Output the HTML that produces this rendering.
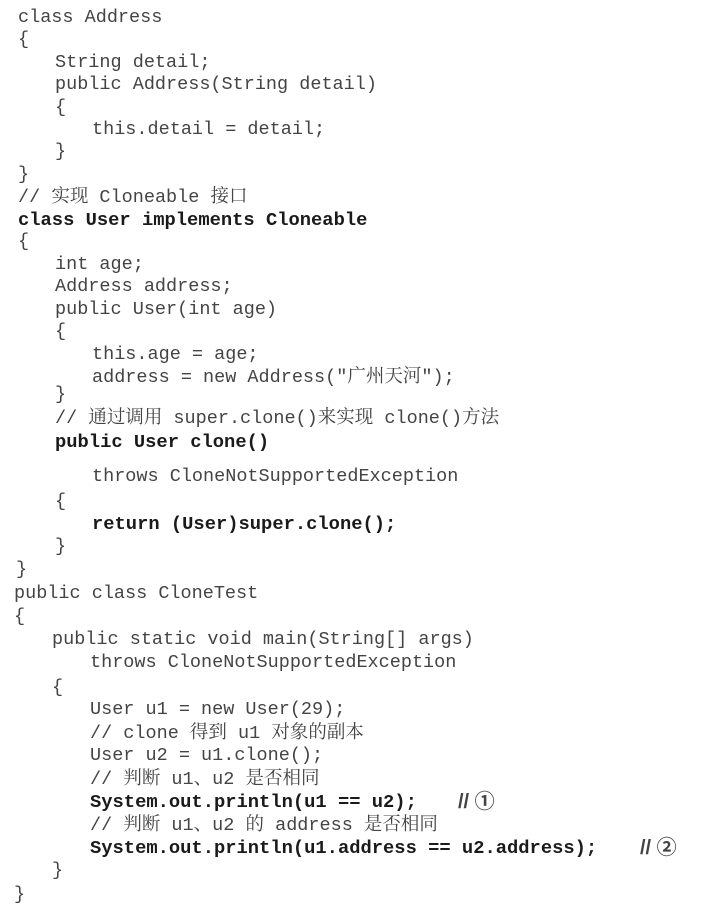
<!DOCTYPE html>
<html><head><meta charset="utf-8"><style>
body{margin:0;width:716px;height:923px;background:#fff;position:relative;overflow:hidden}
.l{position:absolute;white-space:pre;font-family:"Liberation Mono","Noto Serif CJK SC",monospace;font-size:18.5px;line-height:22px;color:#444}
.b{font-weight:bold;color:#1a1a1a;font-size:18.8px}
.z{font-family:"Liberation Serif","Noto Serif CJK SC",serif}
.n{font-family:"Liberation Sans","Noto Sans CJK SC",sans-serif;font-weight:bold;font-size:20px}
</style></head><body>
<div class="l" style="left:18px;top:7px">class Address</div>
<div class="l" style="left:18px;top:29px">{</div>
<div class="l" style="left:55px;top:52px">String detail;</div>
<div class="l" style="left:55px;top:74px">public Address(String detail)</div>
<div class="l" style="left:55px;top:97px">{</div>
<div class="l" style="left:92px;top:119px">this.detail = detail;</div>
<div class="l" style="left:55px;top:141px">}</div>
<div class="l" style="left:18px;top:164px">}</div>
<div class="l" style="left:18px;top:186px">// <span class="z">实现</span> Cloneable <span class="z">接口</span></div>
<div class="l b" style="left:18px;top:209px">class User implements Cloneable</div>
<div class="l" style="left:18px;top:231px">{</div>
<div class="l" style="left:55px;top:254px">int age;</div>
<div class="l" style="left:55px;top:276px">Address address;</div>
<div class="l" style="left:55px;top:299px">public User(int age)</div>
<div class="l" style="left:55px;top:321px">{</div>
<div class="l" style="left:92px;top:344px">this.age = age;</div>
<div class="l" style="left:92px;top:366px">address = new Address("<span class="z">广州天河</span>");</div>
<div class="l" style="left:55px;top:384px">}</div>
<div class="l" style="left:55px;top:407px">// <span class="z">通过调用</span> super.clone()<span class="z">来实现</span> clone()<span class="z">方法</span></div>
<div class="l b" style="left:55px;top:431px">public User clone()</div>
<div class="l" style="left:92px;top:466px">throws CloneNotSupportedException</div>
<div class="l" style="left:55px;top:491px">{</div>
<div class="l b" style="left:92px;top:513px">return (User)super.clone();</div>
<div class="l" style="left:55px;top:536px">}</div>
<div class="l" style="left:16px;top:559px">}</div>
<div class="l" style="left:14px;top:583px">public class CloneTest</div>
<div class="l" style="left:14px;top:606px">{</div>
<div class="l" style="left:52px;top:629px">public static void main(String[] args)</div>
<div class="l" style="left:90px;top:652px">throws CloneNotSupportedException</div>
<div class="l" style="left:52px;top:677px">{</div>
<div class="l" style="left:90px;top:699px">User u1 = new User(29);</div>
<div class="l" style="left:90px;top:722px">// clone <span class="z">得到</span> u1 <span class="z">对象的副本</span></div>
<div class="l" style="left:90px;top:745px">User u2 = u1.clone();</div>
<div class="l" style="left:90px;top:768px">// <span class="z">判断</span> u1<span class="z">、</span>u2 <span class="z">是否相同</span></div>
<div class="l b" style="left:90px;top:791px">System.out.println(u1 == u2);</div>
<div class="l n" style="left:458px;top:791px">// ①</div>
<div class="l" style="left:90px;top:814px">// <span class="z">判断</span> u1<span class="z">、</span>u2 <span class="z">的</span> address <span class="z">是否相同</span></div>
<div class="l b" style="left:90px;top:837px">System.out.println(u1.address == u2.address);</div>
<div class="l n" style="left:640px;top:837px">// ②</div>
<div class="l" style="left:52px;top:860px">}</div>
<div class="l" style="left:14px;top:884px">}</div>
</body></html>
